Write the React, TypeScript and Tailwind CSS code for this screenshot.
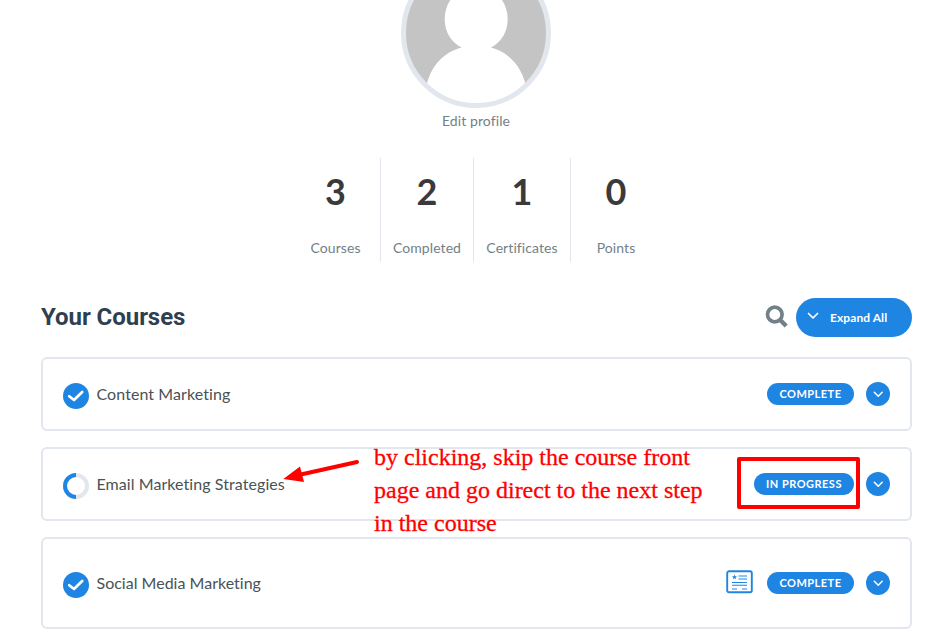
import React from "react";

const STATS = [
  { value: "3", label: "Courses", box: "w-[90px] border-r" },
  { value: "2", label: "Completed", box: "w-[93px] border-r" },
  { value: "1", label: "Certificates", box: "w-[97px] border-r" },
  { value: "0", label: "Points", box: "w-[90px]" },
];

type Course = {
  title: string;
  status: string;
  done: boolean;
  certificate?: boolean;
  height: string;
  pill: string;
  tracking: string;
};

const COURSES: Course[] = [
  { title: "Content Marketing", status: "COMPLETE", done: true, height: "h-[74px]", pill: "w-[87px]", tracking: "tracking-[0.080px]" },
  { title: "Email Marketing Strategies", status: "IN PROGRESS", done: false, height: "h-[74px]", pill: "w-[100px]", tracking: "tracking-[0.070px]" },
  { title: "Social Media Marketing", status: "COMPLETE", done: true, certificate: true, height: "h-[92px]", pill: "w-[87px]", tracking: "tracking-[0.010px]" },
];

function Avatar() {
  return (
    <svg className="-mt-[42px] block h-[150px] w-[150px] shrink-0" viewBox="0 0 150 150">
      <defs>
        <clipPath id="face">
          <circle cx="75" cy="75" r="71" />
        </clipPath>
      </defs>
      <g clipPath="url(#face)">
        <rect width="150" height="150" fill="#c4c4c4" />
        <path
          d="M75 28C57 28 43.700 43 43.700 61C43.700 74 50 84 60.500 89.500C43 94 29.500 108 25.500 128L25 150H125L124.500 126C120 108 107.500 94 90 89.500C100.500 84 106.700 74 106.700 61C106.700 43 93 28 75 28Z"
          fill="#fff"
        />
      </g>
      <circle cx="75" cy="75" r="72.500" fill="none" stroke="#e2e7ed" strokeWidth="5" />
    </svg>
  );
}

function Chevron({ className }: { className: string }) {
  return (
    <svg className={className} viewBox="0 0 12 8" fill="none" stroke="#fff" strokeWidth="1.700" strokeLinecap="round" strokeLinejoin="round">
      <path d="M1.500 1.500L6 6L10.500 1.500" />
    </svg>
  );
}

function StatusIcon({ done }: { done: boolean }) {
  return done ? (
    <svg className="mt-[3px] block size-[26px]" viewBox="0 0 26 26">
      <circle cx="13" cy="13" r="13" fill="#1f85e2" />
      <path d="M6.200 13.300L11 17L19.200 9" fill="none" stroke="#fff" strokeWidth="2.700" strokeLinecap="round" strokeLinejoin="round" />
    </svg>
  ) : (
    <svg className="mt-[3px] block size-[26px]" viewBox="0 0 26 26" fill="none" strokeWidth="4">
      <circle cx="13" cy="13" r="11" stroke="#e2e7ed" />
      <path d="M13 2A11 11 0 0 0 13 24" stroke="#1f85e2" />
    </svg>
  );
}

function CertificateIcon() {
  return (
    <svg className="-mt-[3px] mr-[14px] block h-[24px] w-[27px]" viewBox="0 0 27 24" fill="none" stroke="#1f85e2">
      <rect x="1.200" y="1.300" width="24.600" height="21" rx="1.800" strokeWidth="1.900" />
      <path d="M12.500 6H21M12.500 9H21M6 12.500H21M6 15.300H21M6 19H11M16 19H21" strokeWidth="1.100" />
      <path d="M8.500 4.500L9.200 6.200L11 6.300L9.600 7.500L10.100 9.300L8.500 8.300L6.900 9.300L7.400 7.500L6 6.300L7.800 6.200Z" fill="#1f85e2" stroke="none" />
    </svg>
  );
}

function CourseRow({ course }: { course: Course }) {
  return (
    <div className={`flex items-center justify-between rounded-[6px] border-2 border-[#e2e7ed] bg-white px-5 ${course.height}`}>
      <div className="flex items-center">
        <StatusIcon done={course.done} />
        <span className={`ml-[7.500px] text-[16px] leading-6 text-[#495255] ${course.tracking}`}>{course.title}</span>
      </div>
      <div className="flex items-center">
        {course.certificate && <CertificateIcon />}
        <span className={`flex h-[22px] items-center justify-center rounded-full bg-[#1f85e2] text-[11px] font-bold tracking-[0.480px] text-white ${course.pill}`}>
          {course.status}
        </span>
        <span className="ml-3 flex size-6 items-center justify-center rounded-full bg-[#1f85e2]">
          <Chevron className="h-[7px] w-[10.500px]" />
        </span>
      </div>
    </div>
  );
}

export default function App() {
  return (
    <div className="relative h-[637px] w-[952px] overflow-hidden bg-white font-[Lato,sans-serif]">
      <div className="flex flex-col items-center">
        <Avatar />
        <div className="mt-[3px] text-[14px] leading-5 tracking-[0.100px] text-[#728188]">Edit profile</div>
      </div>

      <div className="mt-[27px] ml-[291px] flex h-[104px]">
        {STATS.map((s) => (
          <div key={s.label} className={`flex flex-col items-center border-[#e2e7ed] ${s.box}`}>
            <div className="mt-[10px] text-[36px] leading-[46px] font-bold text-[#3a3a3a]">{s.value}</div>
            <div className="mt-[24px] text-[14px] leading-5 tracking-[0.080px] text-[#728188]">{s.label}</div>
          </div>
        ))}
      </div>

      <div className="mt-[36px] mr-[40px] ml-[41px] flex h-[39px] items-center justify-between">
        <h2 className="-mt-[2px] font-[Roboto,sans-serif] text-[24px] leading-8 font-bold tracking-[-0.050px] text-[#2f3f50]">Your Courses</h2>
        <div className="flex items-center">
          <svg className="mr-[8px] -mt-[2px] block size-[23px]" viewBox="0 0 23 23" fill="none" stroke="#728188">
            <circle cx="9.800" cy="9.500" r="7.300" strokeWidth="3.700" />
            <path d="M15.200 15L21.200 21" strokeWidth="4.400" />
          </svg>
          <button className="flex h-[39px] w-[116px] items-center rounded-full bg-[#1f85e2] pl-[11px] text-[12px] font-bold tracking-[0.080px] text-white">
            <Chevron className="-mt-[3px] mr-[11px] h-[8px] w-[12px]" />
            Expand All
          </button>
        </div>
      </div>

      <div className="mt-[20px] mr-[40px] ml-[41px] flex flex-col gap-4">
        {COURSES.map((c) => (
          <CourseRow key={c.title} course={c} />
        ))}
      </div>

      <svg className="absolute top-[455px] left-[280px] h-[34px] w-[84px]" viewBox="0 0 84 34">
        <path d="M77 7L22 19.200" stroke="#f00" strokeWidth="4" strokeLinecap="round" />
        <path d="M3.300 24L20 11.500L24 27Z" fill="#f00" />
      </svg>
      <div className="absolute top-[441px] left-[374px] w-[350px] font-['Liberation_Serif',serif] text-[24px] leading-[33px] whitespace-nowrap text-[#f00] [-webkit-text-stroke:0.3px_#f00]">
        by clicking, skip the course front
        <br />
        page and go direct to the next step
        <br />
        in the course
      </div>
      <div className="absolute top-[457px] left-[737px] h-[52px] w-[123px] rounded-[2px] border-4 border-[#f00]" />
    </div>
  );
}
